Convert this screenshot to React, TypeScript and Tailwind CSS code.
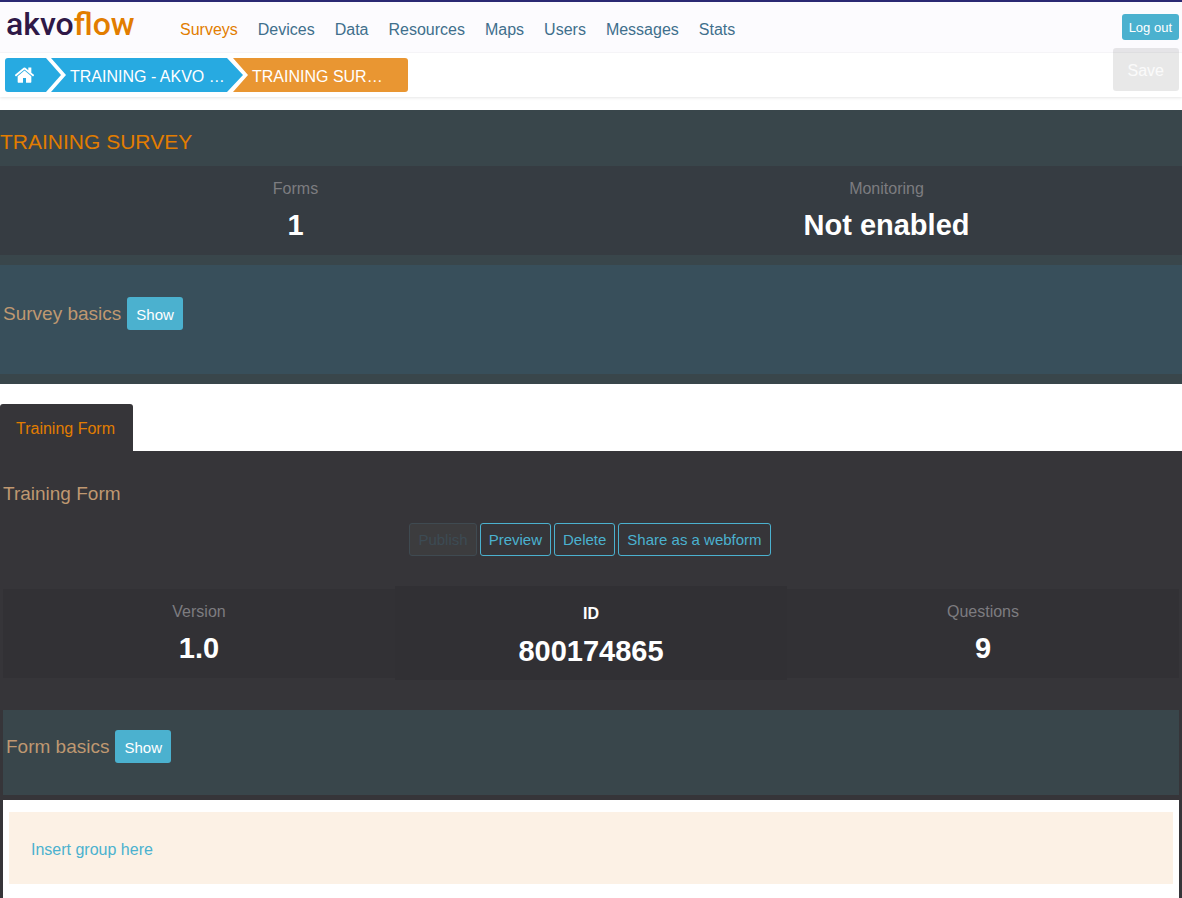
import type { ReactNode } from "react";

const NAV_ITEMS = ["Surveys", "Devices", "Data", "Resources", "Maps", "Users", "Messages", "Stats"];

function HomeIcon() {
  return (
    <svg viewBox="96 240 1600 1300" width="19" height="16" fill="currentColor" aria-hidden="true">
      <path d="M1472 992v480q0 26-19 45t-45 19h-384v-384h-256v384h-384q-26 0-45-19t-19-45v-480q0-1 .5-3t.5-3l575-474 575 474q1 2 1 6zm223-69l-62 74q-8 9-21 11h-3q-13 0-21-7l-692-577-692 577q-12 8-24 7-13-2-21-11l-62-74q-8-10-7-23.5t11-21.5l719-599q32-26 76-26t76 26l244 204v-195q0-14 9-23t23-9h192q14 0 23 9t9 23v408l219 182q10 8 11 21.5t-7 23.5z" />
    </svg>
  );
}

function SolidButton({ children }: { children: ReactNode }) {
  return (
    <button type="button" className="h-[33px] rounded-[3px] bg-[#4bb1cf] px-[9px] pt-[2px] text-[15px] leading-5 text-white">
      {children}
    </button>
  );
}

function OutlineButton({ children, disabled = false }: { children: ReactNode; disabled?: boolean }) {
  return (
    <button
      type="button"
      disabled={disabled}
      className="h-[33px] rounded-[3px] border border-[#4bb1cf] px-2 text-[15px] leading-5 text-[#4bb1cf] disabled:border-[#3f4a51] disabled:bg-[#3c3c3e] disabled:text-[#3c4b54]"
    >
      {children}
    </button>
  );
}

function Stat({ label, value }: { label: string; value: string }) {
  return (
    <li className="flex h-[89px] flex-col items-center bg-[#323135] pt-[11px]">
      <span className="text-base text-[#7d7c80]">{label}</span>
      <span className="text-[29px] leading-[48px] font-bold text-white">{value}</span>
    </li>
  );
}

function Header() {
  return (
    <header className="border-t-2 border-[#2b2973] bg-white shadow-[0_1px_3px_rgba(0,0,0,0.1)]">
      <div className="flex h-[51px] items-center border-b border-[#f5f4f7] bg-[#fcfbfe] pr-[3px] pl-[6px]">
        <a href="#" className="w-[174px] pb-[7px] font-['Roboto','Liberation_Sans',sans-serif] text-[32px] leading-9 font-medium text-[#2f1847]">
          akvo<span className="text-[#e27d00]">flow</span>
        </a>
        <nav aria-label="Main" className="flex-1 pt-[6px]">
          <ul className="flex gap-5">
            {NAV_ITEMS.map((item, index) => (
              <li key={item}>
                <a href="#" className={index === 0 ? "text-[#e27d00]" : "text-[#406f8c]"}>
                  {item}
                </a>
              </li>
            ))}
          </ul>
        </nav>
        <button type="button" className="h-[26px] rounded-[3px] bg-[#4bb1cf] px-[7px] pt-px text-[13px] text-white">
          Log out
        </button>
      </div>
      <div className="flex h-11 items-start justify-between pr-[3px] pl-[5px]">
        <nav aria-label="Breadcrumb" className="pt-[5px] text-white">
          <ol className="flex h-[34px]">
            <li className="w-14 rounded-l-[3px] bg-[#27aae1] [clip-path:polygon(0_0,calc(100%-15px)_0,100%_50%,calc(100%-15px)_100%,0_100%)]">
              <a href="#" aria-label="Home" className="flex h-full items-center pl-[10px]">
                <HomeIcon />
              </a>
            </li>
            <li className="-ml-[10px] w-48 bg-[#27aae1] [clip-path:polygon(0_0,calc(100%-16px)_0,100%_50%,calc(100%-16px)_100%,0_100%,15px_50%)]">
              <a href="#" className="flex h-full items-center pt-[3px] pl-[19px]">
                TRAINING - AKVO …
              </a>
            </li>
            <li className="-ml-[10px] w-[175px] rounded-r-[3px] bg-[#e99632] [clip-path:polygon(0_0,100%_0,100%_100%,0_100%,15px_50%)]">
              <a href="#" className="flex h-full items-center pt-[3px] pl-[19px]">
                TRAINING SUR…
              </a>
            </li>
          </ol>
        </nav>
        <button type="button" disabled className="-mt-[5px] h-[43px] rounded-[3px] bg-black/9 px-[15px] pt-[2px] text-base text-white/80">
          Save
        </button>
      </div>
    </header>
  );
}

export default function App() {
  return (
    <div className="flex min-h-screen flex-col bg-white font-['Liberation_Sans',Arial,sans-serif] text-base">
      <Header />
      <main className="flex flex-1 flex-col pt-[13px]">
        <section className="bg-[#39464b] pb-[10px]">
          <h1 className="pt-[18px] pb-[10px] text-[21px] leading-7 text-[#e27d00]">TRAINING SURVEY</h1>
          <ul className="grid grid-cols-2 [&>li]:bg-[#363c42]">
            <Stat label="Forms" value="1" />
            <Stat label="Monitoring" value="Not enabled" />
          </ul>
          <div className="mt-[10px] flex h-[109px] gap-[6px] bg-[#384f5b] pt-8 pl-[3px]">
            <h2 className="text-[19px] leading-[33px] text-[#bf9871]">Survey basics</h2>
            <SolidButton>Show</SolidButton>
          </div>
        </section>

        <nav aria-label="Forms" className="mt-5 flex">
          <a href="#" className="rounded-t-[3px] bg-[#363539] pt-[13px] pr-[18px] pb-[10px] pl-4 text-[#e27d00]">
            Training Form
          </a>
        </nav>

        <section className="flex flex-1 flex-col bg-[#363539] px-[3px] pt-[29px]">
          <h2 className="text-[19px] leading-7 text-[#bf9871]">Training Form</h2>
          <div className="mt-[15px] flex justify-center gap-[3px] pr-[2px]">
            <OutlineButton disabled>Publish</OutlineButton>
            <OutlineButton>Preview</OutlineButton>
            <OutlineButton>Delete</OutlineButton>
            <OutlineButton>Share as a webform</OutlineButton>
          </div>
          <ul className="mt-[30px] grid grid-cols-3 items-center">
            <Stat label="Version" value="1.0" />
            <li className="flex h-[94px] flex-col items-center bg-[#313034] pt-4 font-bold text-white">
              <span>ID</span>
              <span className="text-[29px] leading-[50px]">800174865</span>
            </li>
            <Stat label="Questions" value="9" />
          </ul>
          <div className="mt-[30px] flex h-[85px] gap-[6px] bg-[#39464b] pt-5 pl-[3px]">
            <h3 className="text-[19px] leading-[33px] text-[#bf9871]">Form basics</h3>
            <SolidButton>Show</SolidButton>
          </div>
          <div className="mt-[5px] flex-1 bg-white px-[6px] pt-3 pb-[14px]">
            <div className="flex h-[72px] items-center bg-[#fcf1e5] pt-1 pl-[22px]">
              <a href="#" className="text-[#4bb1cf]">
                Insert group here
              </a>
            </div>
          </div>
        </section>
      </main>
    </div>
  );
}
